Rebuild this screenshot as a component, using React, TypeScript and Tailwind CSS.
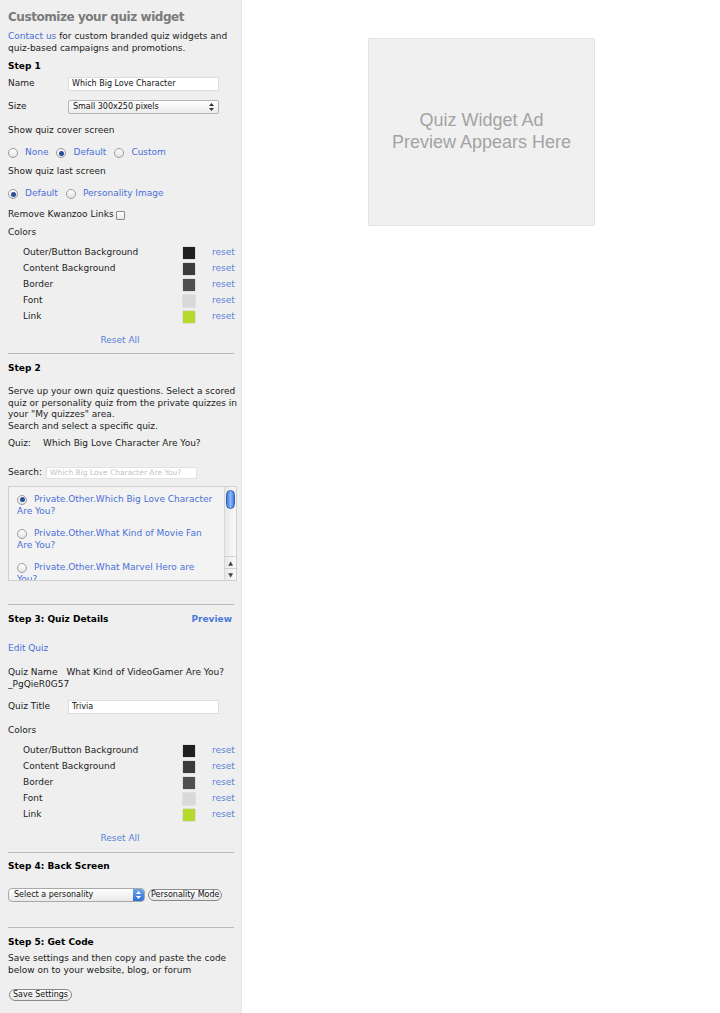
import React from "react";

const LINK = "text-[#4a6fd8]";

function Radio({ checked }: { checked?: boolean }) {
  return (
    <span className="inline-flex items-center justify-center w-[10px] h-[10px] rounded-full border border-[#9a9a9a] bg-gradient-to-b from-white to-[#e4e4e4] shrink-0">
      {checked && <span className="w-[5px] h-[5px] rounded-full bg-[#2a4e9a]" />}
    </span>
  );
}

function RadioOpt({ label, checked }: { label: string; checked?: boolean }) {
  return (
    <span className="inline-flex items-center gap-[7px] mr-[8px]">
      <Radio checked={checked} />
      <span className={LINK}>{label}</span>
    </span>
  );
}

function Line({ children, className = "" }: { children: React.ReactNode; className?: string }) {
  return <div className={"leading-[12px] " + className}>{children}</div>;
}

function Hr({ className = "" }: { className?: string }) {
  return <div className={"h-px bg-[#b9b9b9] mr-[6px] " + className} />;
}

function TextInput({ value, className = "" }: { value: string; className?: string }) {
  return (
    <div className={"h-[14px] bg-white border border-[#dddddd] flex items-center px-[3px] text-[8px] text-[#111] " + className}>
      {value}
    </div>
  );
}

function UpDown() {
  return (
    <svg width="5" height="8" viewBox="0 0 5 8">
      <path d="M2.5 0 L5 3 L0 3 Z" fill="#333" />
      <path d="M2.5 8 L5 5 L0 5 Z" fill="#333" />
    </svg>
  );
}

const colorRows: [string, string][] = [
  ["Outer/Button Background", "bg-[#1f1f1f]"],
  ["Content Background", "bg-[#3b3b3b]"],
  ["Border", "bg-[#505050]"],
  ["Font", "bg-[#d9d9d9]"],
  ["Link", "bg-[#b5d92c]"],
];

function Colors() {
  return (
    <div>
      {colorRows.map(([label, bg]) => (
        <div key={label} className="h-[16px] flex items-center">
          <span className="pl-[15px] w-[175px] text-[#222]">{label}</span>
          <span className={"w-[12px] h-[12px] shadow-[0_0_1px_rgba(0,0,0,0.4)] " + bg} />
          <span className={"ml-[17px] text-[#5b82d6]"}>reset</span>
        </div>
      ))}
    </div>
  );
}

function ListItem({ label, checked, className = "" }: { label: string; checked?: boolean; className?: string }) {
  return (
    <div className={"leading-[12px] " + className}>
      <span className="inline-block align-middle mr-[7px] h-[10px] leading-[0]">
        <Radio checked={checked} />
      </span>
      {label}
    </div>
  );
}

export default function App() {
  return (
    <div
      className="flex min-h-[1013px] bg-white text-[9px] text-[#222]"
      style={{ fontFamily: '"DejaVu Sans", Verdana, sans-serif' }}
    >
      <div className="w-[242px] shrink-0 bg-[#efefef] pt-[1px] pl-[8px] pr-[1px] border-r border-[#e6e6e6]">
        <div className="pt-[9px] leading-[15px] text-[12px] font-bold text-[#7a7a7a] tracking-[-0.45px]">
          Customize your quiz widget
        </div>
        <div className="mt-[6px] leading-[11.5px]">
          <span className={LINK}>Contact us</span> for custom branded quiz widgets and quiz-based campaigns and promotions.
        </div>
        <Line className="mt-[6px] font-bold text-black">Step 1</Line>
        <div className="mt-[5px] h-[14px] flex items-center">
          <span className="w-[60px]">Name</span>
          <TextInput value="Which Big Love Character" className="w-[151px]" />
        </div>
        <div className="mt-[9px] h-[14px] flex items-center">
          <span className="w-[60px]">Size</span>
          <div className="w-[151px] h-[14px] rounded-[2px] border border-[#b5b5b5] bg-gradient-to-b from-white to-[#ececec] flex items-center justify-between px-[4px] text-[8px] text-[#111]">
            <span>Small 300x250 pixels</span>
            <UpDown />
          </div>
        </div>
        <Line className="mt-[10px]">Show quiz cover screen</Line>
        <div className="mt-[11px] h-[12px] flex items-center">
          <RadioOpt label="None" />
          <RadioOpt label="Default" checked />
          <RadioOpt label="Custom" />
        </div>
        <Line className="mt-[6px]">Show quiz last screen</Line>
        <div className="mt-[11px] h-[12px] flex items-center">
          <RadioOpt label="Default" checked />
          <RadioOpt label="Personality Image" />
        </div>
        <div className="mt-[9px] h-[12px] flex items-center gap-[2px]">
          <span>Remove Kwanzoo Links</span>
          <span className="w-[9px] h-[9px] border border-[#8a8a8a] rounded-[1px] bg-gradient-to-b from-white to-[#e8e8e8]" />
        </div>
        <Line className="mt-[5px]">Colors</Line>
        <div className="mt-[7px]">
          <Colors />
        </div>
        <Line className="mt-[9px] text-center pr-[8px] text-[#5b82d6]">Reset All</Line>
        <Hr className="mt-[7px]" />

        <Line className="mt-[8px] font-bold text-black">Step 2</Line>
        <div className="mt-[12px] leading-[11.5px]">
          Serve up your own quiz questions. Select a scored quiz or personality quiz from the private quizzes in your "My quizzes" area.
          <br />
          Search and select a specific quiz.
        </div>
        <Line className="mt-[5px]">
          Quiz:<span className="ml-[12px]">Which Big Love Character Are You?</span>
        </Line>
        <div className="mt-[18px] h-[12px] flex items-center">
          <span className="w-[38px]">Search:</span>
          <div className="w-[151px] h-[12px] bg-white border border-[#e2e2e2] flex items-center px-[3px] text-[7.5px] text-[#c4c4c4]">
            Which Big Love Character Are You?
          </div>
        </div>
        <div className="mt-[7px] w-[229px] h-[95px] border border-[#cfcfcf] bg-[#f3f3f3] flex overflow-hidden">
          <div className="flex-1 pl-[8px] pr-[8px] pt-[6px] text-[#4a6fd8] overflow-hidden">
            <ListItem label="Private.Other.Which Big Love Character Are You?" checked />
            <ListItem label="Private.Other.What Kind of Movie Fan Are You?" className="mt-[10px]" />
            <ListItem label="Private.Other.What Marvel Hero are You?" className="mt-[10px]" />
          </div>
          <div className="w-[12px] border-l border-[#d8d8d8] bg-gradient-to-r from-[#e8e8e8] to-[#fafafa] flex flex-col items-center pt-[3px]">
            <div className="w-[9px] h-[19px] rounded-full bg-gradient-to-r from-[#3d7ee6] via-[#8fb8f4] to-[#3d7ee6] border border-[#2f5fb3]" />
            <div className="flex-1" />
            <div className="w-full border-t border-[#cfcfcf] flex flex-col items-center text-[6px] leading-[11px] text-[#444]">
              <span>▲</span>
              <span className="border-t border-[#cfcfcf] w-full text-center">▼</span>
            </div>
          </div>
        </div>
        <Hr className="mt-[23px]" />

        <div className="mt-[9px] h-[12px] flex items-center justify-between pr-[8px]">
          <span className="font-bold text-black">Step 3: Quiz Details</span>
          <span className="font-bold text-[#4a78d8]">Preview</span>
        </div>
        <Line className={"mt-[16px] " + LINK}>Edit Quiz</Line>
        <div className="mt-[12px] leading-[12px]">
          Quiz Name<span className="ml-[9px]">What Kind of VideoGamer Are You?</span>
          <br />
          _PgQieR0G57
        </div>
        <div className="mt-[10px] h-[14px] flex items-center">
          <span className="w-[60px]">Quiz Title</span>
          <TextInput value="Trivia" className="w-[151px]" />
        </div>
        <Line className="mt-[10px]">Colors</Line>
        <div className="mt-[7px]">
          <Colors />
        </div>
        <Line className="mt-[9px] text-center pr-[8px] text-[#5b82d6]">Reset All</Line>
        <Hr className="mt-[8px]" />

        <Line className="mt-[7px] font-bold text-black">Step 4: Back Screen</Line>
        <div className="mt-[16px] h-[14px] flex items-center">
          <div className="w-[137px] h-[14px] rounded-[4px] border border-[#a8a8a8] bg-gradient-to-b from-white to-[#e8e8e8] flex items-center justify-between pl-[5px] text-[8px] text-[#111] overflow-hidden">
            <span>Select a personality</span>
            <span className="w-[11px] h-full bg-gradient-to-b from-[#6fa4ee] to-[#2f6fd6] flex items-center justify-center">
              <svg width="5" height="8" viewBox="0 0 5 8">
                <path d="M2.5 0 L5 3 L0 3 Z" fill="#fff" />
                <path d="M2.5 8 L5 5 L0 5 Z" fill="#fff" />
              </svg>
            </span>
          </div>
          <div className="ml-[3px] h-[12px] px-[2px] rounded-full border border-[#8a8a8a] bg-gradient-to-b from-white to-[#e6e6e6] flex items-center text-[8px] text-[#111]">
            Personality Mode
          </div>
        </div>
        <Hr className="mt-[25px]" />

        <Line className="mt-[8px] font-bold text-black">Step 5: Get Code</Line>
        <div className="mt-[4px] leading-[12px]">
          Save settings and then copy and paste the code below on to your website, blog, or forum
        </div>
        <div className="mt-[13px] ml-[1px] w-fit h-[12px] px-[3px] rounded-full border border-[#8a8a8a] bg-gradient-to-b from-white to-[#e6e6e6] flex items-center text-[8px] text-[#111]">
          Save Settings
        </div>
      </div>

      <div className="flex-1">
        <div className="ml-[126px] mt-[38px] w-[227px] h-[188px] bg-[#f0f0f0] border border-[#e2e2e2] flex items-center justify-center">
          <div
            className="text-center text-[18px] leading-[22px] text-[#a3a3a3] -mt-[3px]"
            style={{ fontFamily: '"Liberation Sans", Arial, sans-serif' }}
          >
            Quiz Widget Ad
            <br />
            Preview Appears Here
          </div>
        </div>
      </div>
    </div>
  );
}
